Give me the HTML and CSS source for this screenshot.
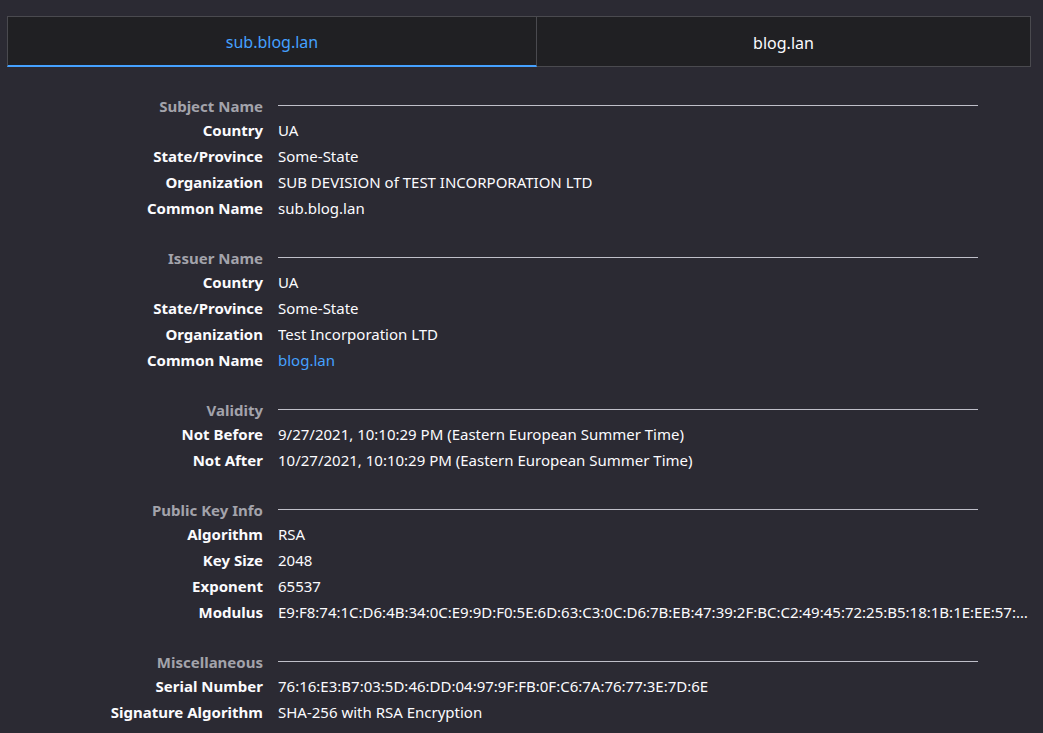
FILE: index.html
```html
<!DOCTYPE html>
<html>
<head>
<meta charset="utf-8">
<link rel="stylesheet" href="styles.css">
</head>
<body>
<div class="tabs">
  <div class="tab active">sub.blog.lan</div>
  <div class="tab">blog.lan</div>
</div>
<div class="content">
  <section class="sec">
    <div class="lbl head">Subject Name</div><div class="rule"></div>
    <div class="lbl">Country</div><div class="val">UA</div>
    <div class="lbl">State/Province</div><div class="val">Some-State</div>
    <div class="lbl">Organization</div><div class="val">SUB DEVISION of TEST INCORPORATION LTD</div>
    <div class="lbl">Common Name</div><div class="val">sub.blog.lan</div>
  </section>
  <section class="sec">
    <div class="lbl head">Issuer Name</div><div class="rule"></div>
    <div class="lbl">Country</div><div class="val">UA</div>
    <div class="lbl">State/Province</div><div class="val">Some-State</div>
    <div class="lbl">Organization</div><div class="val">Test Incorporation LTD</div>
    <div class="lbl">Common Name</div><div class="val"><a class="link" href="#">blog.lan</a></div>
  </section>
  <section class="sec">
    <div class="lbl head">Validity</div><div class="rule"></div>
    <div class="lbl">Not Before</div><div class="val">9/27/2021, 10:10:29 PM (Eastern European Summer Time)</div>
    <div class="lbl">Not After</div><div class="val">10/27/2021, 10:10:29 PM (Eastern European Summer Time)</div>
  </section>
  <section class="sec">
    <div class="lbl head">Public Key Info</div><div class="rule"></div>
    <div class="lbl">Algorithm</div><div class="val">RSA</div>
    <div class="lbl">Key Size</div><div class="val">2048</div>
    <div class="lbl">Exponent</div><div class="val">65537</div>
    <div class="lbl">Modulus</div><div class="val">E9:F8:74:1C:D6:4B:34:0C:E9:9D:F0:5E:6D:63:C3:0C:D6:7B:EB:47:39:2F:BC:C2:49:45:72:25:B5:18:1B:1E:EE:57:A1:0D:3C:77:9E:41:55:08:C4:2A:91:0F</div>
  </section>
  <section class="sec">
    <div class="lbl head">Miscellaneous</div><div class="rule"></div>
    <div class="lbl">Serial Number</div><div class="val">76:16:E3:B7:03:5D:46:DD:04:97:9F:FB:0F:C6:7A:76:77:3E:7D:6E</div>
    <div class="lbl">Signature Algorithm</div><div class="val">SHA-256 with RSA Encryption</div>
  </section>
</div>
</body>
</html>
```
FILE: styles.css
```css
html, body {
  margin: 0;
  padding: 0;
  background: #2b2a33;
  color: #fbfbfe;
  font-family: "Noto Sans", "Open Sans", sans-serif;
  font-size: 15px;
  overflow: hidden;
}
.tabs {
  display: flex;
  margin: 16px 12px 0 7px;
}
.tab {
  flex: 1 1 0;
  height: 51px;
  box-sizing: border-box;
  background: #202023;
  border: 1px solid #4a4a4f;
  display: flex;
  align-items: center;
  justify-content: center;
  font-size: 16px;
  color: #fbfbfe;
  padding-top: 2px;
}
.tab.active {
  flex: 0 0 530px;
  color: #45a1ff;
  border-bottom: 2px solid #45a1ff;
  border-right: 1px solid #4a4a4f;
  padding-top: 1px;
}
.tab + .tab {
  border-left: none;
}
.content {
  padding-top: 28px;
  padding-right: 13px;
}
.sec {
  display: grid;
  grid-template-columns: 263px minmax(0, 1fr);
  column-gap: 15px;
  margin-bottom: 26px;
}
.lbl {
  text-align: right;
  font-weight: bold;
  line-height: 26px;
  white-space: nowrap;
}
.lbl.head {
  color: #a3a3ab;
  line-height: 22px;
}
.rule {
  align-self: center;
  height: 1px;
  background: #bfbfc9;
  margin-right: 52px;
  margin-top: -2px;
}
.val {
  line-height: 26px;
  white-space: nowrap;
  overflow: hidden;
  text-overflow: ellipsis;
}
.link {
  color: #45a1ff;
  text-decoration: none;
}
```
